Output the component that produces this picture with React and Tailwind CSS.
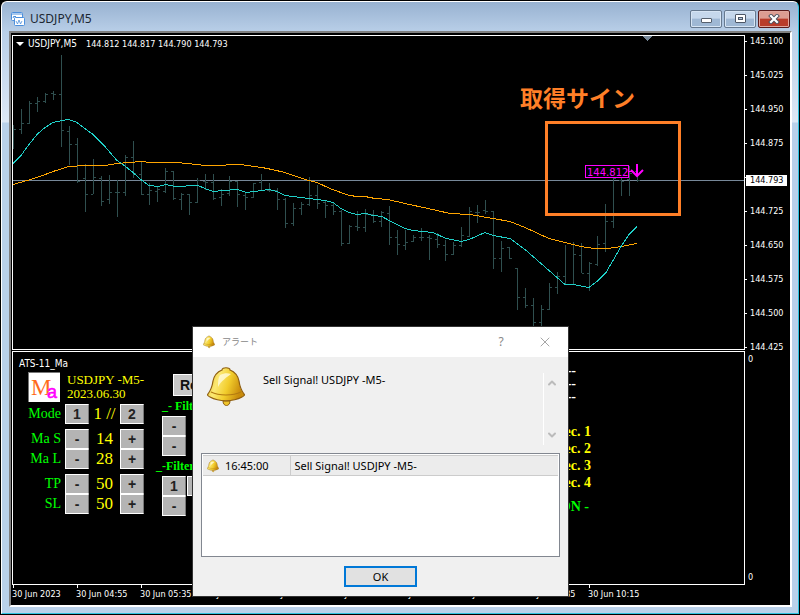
import { ChevronDown, ChevronUp, X } from 'lucide-react';

// the level next to the current price is only a tick
const PRICES = ['145.100', '145.025', '144.950', '144.875', '', '144.725', '144.650', '144.575', '144.500', '144.425'];
const TIMES = ['2023', '04:55', '05:35', '06:15', '06:55', '07:35', '08:15', '08:55', '09:35', '10:15'];

// [high, low, open, close], one bar every 8px
const BARS = [
  [125, 149, 129, 129], [109, 134, 129, 123], [101, 124, 123, 103], [97, 112, 103, 101], [93, 103, 101, 94],
  [91, 100, 93, 94], [55, 147, 94, 130], [126, 165, 131, 144], [138, 183, 144, 181], [164, 212, 178, 194],
  [159, 194, 194, 177], [176, 206, 178, 201], [175, 204, 199, 192], [180, 217, 192, 192], [155, 196, 192, 157],
  [141, 178, 157, 173], [162, 195, 174, 194], [183, 205, 194, 190], [186, 202, 191, 189], [168, 193, 191, 171],
  [171, 200, 171, 198], [193, 210, 199, 194], [194, 215, 194, 202], [178, 203, 202, 180], [174, 190, 181, 182],
  [174, 200, 182, 198], [189, 206, 197, 194], [176, 196, 193, 181], [181, 207, 181, 194], [192, 210, 195, 197],
  [183, 198, 197, 183], [174, 190, 182, 190], [183, 192, 190, 190], [188, 210, 190, 199], [198, 228, 199, 223],
  [203, 226, 223, 208], [202, 215, 208, 204], [177, 206, 204, 195], [185, 209, 195, 203], [200, 218, 202, 205],
  [202, 215, 205, 211], [210, 246, 211, 243], [225, 244, 243, 226], [211, 231, 226, 227], [209, 232, 227, 214],
  [210, 223, 214, 221], [211, 227, 221, 212], [206, 245, 213, 237], [230, 255, 237, 244], [230, 250, 245, 242],
  [235, 242, 241, 237], [228, 241, 237, 237], [235, 260, 237, 238], [233, 248, 239, 244], [240, 261, 245, 254],
  [242, 255, 254, 245], [227, 247, 245, 235], [207, 237, 236, 211], [205, 223, 212, 212], [200, 214, 210, 211],
  [211, 269, 211, 258], [241, 272, 258, 248], [247, 259, 247, 258], [268, 310, 268, 297], [288, 308, 297, 305],
  [298, 327, 305, 322], [305, 328, 322, 309], [283, 310, 309, 287], [272, 294, 287, 276], [245, 285, 276, 284],
  [242, 285, 284, 254], [243, 273, 255, 273], [262, 291, 273, 263], [236, 266, 264, 244], [204, 252, 243, 221],
  [178, 228, 221, 178], [178, 196, 180, 181], [166, 196, 179, 173], [168, 182, 171, 180],
];

const FAST_MA =
  '13,163 21,155 29,144 37,134 45,127 53,122 62,120 69,119 77,122 85,128 93,134 105,146 117,160 123,164 133,172 142,180 149,185 158,186 166,184 175,186 198,185 205,188 213,191 223,190 238,189 246,192 255,191 269,189 277,191 285,195 309,198 325,200 333,202 341,208 349,212 357,214 366,213 373,215 382,216 389,220 405,228 413,230 433,232 446,238 461,241 469,239 485,232 493,235 510,238 525,249 565,284 573,284 589,287 597,281 606,272 613,260 621,246 629,234 637,226';
const SLOW_MA =
  '13,184 27,180 40,176 53,171 69,166 85,165 105,165 117,163 130,162 141,161 150,162 175,162 188,163 205,165 222,165 230,164 240,164 262,167 272,169 285,172 293,175 309,180 317,182 330,188 349,195 358,196 365,196 375,198 388,199 405,203 437,210 450,213 470,214 493,218 510,221 525,227 549,238 565,242 581,246 594,248 608,248 621,246 637,243';

function Bell({ className }) {
  return (
    <svg viewBox="0 0 38 40" className={className} aria-hidden="true">
      <defs>
        <linearGradient id="bell" x1="0" x2="1" y1="0" y2="0.3">
          <stop offset="0" stopColor="#e9b91c" />
          <stop offset="0.35" stopColor="#fbe873" />
          <stop offset="0.65" stopColor="#f2cd2c" />
          <stop offset="1" stopColor="#c98c0c" />
        </linearGradient>
      </defs>
      <path d="M16 34c0 6 7 6 7 0z" fill="#f0c52b" stroke="#8f5f10" />
      <path d="M15 3c0-3 8-3 8 0 5 2 8 6 9 11 1 7 2 9 5 13 1 1 0 2-2 3-9 5-23 5-32 0-2-1-3-2-2-3 3-4 4-6 5-13 1-5 4-9 9-11z" fill="url(#bell)" stroke="#8f5f10" strokeWidth="1.2" />
      <path d="M4 25c8 4 22 4 30 0" fill="none" stroke="#b37b12" strokeWidth="1.2" />
      <path d="M13 8c4-2 8-2 11-1-4 3-10 7-13 13 0-5 0-9 2-12z" fill="#fffbe0" opacity="0.8" />
    </svg>
  );
}

function TitleBar() {
  const button = 'flex h-[18px] w-8 items-center justify-center rounded-[2px] border border-[#66798f] bg-linear-to-b from-[#c6d8ec] from-45% to-[#9fb8d4] to-50% shadow-[inset_0_0_0_1px_#d7e5f4]';
  return (
    <header className="flex h-[29px] shrink-0 items-center pt-1 pr-0.5 pl-0.5">
      <svg viewBox="0 0 14 14" className="size-3.5 shrink-0" fill="#fff" stroke="#4c8fdc" aria-hidden="true">
        <rect x="0.5" y="0.5" width="11" height="8" rx="1" />
        <path d="M1 2h10" strokeWidth="1" />
        <path d="M2 6l1-2 1 1 1-1" fill="none" />
        <rect x="3.5" y="5.5" width="10" height="8" rx="1" />
        <path d="M5 9l1.500 3 1.500-4 1.500 4 1.500-3" fill="none" strokeWidth="0.8" />
      </svg>
      <h1 className="flex-1 pl-[5px] font-['Noto_Sans'] text-xs text-[#1c2733]">USDJPY,M5</h1>
      <div className="flex gap-0.5">
        <button className={button} aria-label="Minimize">
          <span className="mt-1 h-[5px] w-[11px] rounded-[1px] border border-[#56606d] bg-white" />
        </button>
        <button className={button} aria-label="Maximize">
          <span className="flex h-[9px] w-[11px] items-center justify-center rounded-[1px] border border-[#4d5766] bg-white">
            <span className="h-[3px] w-[5px] border border-[#4d5766] bg-[#b5c8dd]" />
          </span>
        </button>
        <button
          className="flex h-[18px] w-8 items-center justify-center rounded-[2px] border border-[#5a1b1b] bg-linear-to-b from-[#dd9d92] from-45% to-[#b93c2a] to-50% shadow-[inset_0_0_0_1px_#e0a79e]"
          aria-label="Close"
        >
          <svg viewBox="0 0 12 10" className="h-2.5 w-3" strokeLinecap="square" aria-hidden="true">
            <path d="M3 2l6 6M9 2l-6 6" stroke="#4b4f5c" strokeWidth="4" />
            <path d="M3 2l6 6M9 2l-6 6" stroke="#fff" strokeWidth="2.200" />
          </svg>
        </button>
      </div>
    </header>
  );
}

function PriceChart() {
  return (
    <section className="relative h-[315px] shrink-0 overflow-hidden border border-white">
      <svg className="block h-full w-full" shapeRendering="crispEdges" fill="none">
        <g transform="translate(-13 -36)">
          <path d="M13 180.500H2600" stroke="#778899" />
          {BARS.map(([high, low, open, close], i) => {
            const x = 13 + i * 8;
            return (
              <path
                key={i}
                d={`M${x + 0.5} ${high}V${low}M${x - 2} ${open + 0.5}h2M${x + 1} ${close + 0.5}h2`}
                stroke="#2f4f4f"
              />
            );
          })}
          <polyline points={SLOW_MA} stroke="#ffa500" transform="translate(0 0.5)" />
          <polyline points={FAST_MA} stroke="#20d0c8" transform="translate(0 0.5)" />
          <path d="M642 36h10l-5 5z" fill="#778899" />
          <rect x="585.500" y="165.500" width="43" height="12" stroke="#f0f" />
          <path d="M629 171.500h4" stroke="#f0f" />
          <path d="M637 164v12M631 170l6 6 6-6" stroke="#f0f" strokeWidth="2" shapeRendering="auto" />
          <text x="587" y="176" fill="#f0f" className="font-['DejaVu_Sans'] text-[10px]">144.812</text>
          <rect x="546.500" y="122.500" width="133" height="92" stroke="#ff7f27" strokeWidth="3" />
        </g>
      </svg>
      <p className="absolute top-px left-[3px] flex items-center text-[9px] leading-[14px] whitespace-nowrap">
        <svg viewBox="0 0 8 4" className="mr-1 h-1 w-2" fill="#fff" aria-hidden="true"><path d="M0 0h8L4 4z" /></svg>
        <span className="w-[58px] text-[10px]">USDJPY,M5</span>
        144.812 144.817 144.790 144.793
      </p>
      <p className="absolute top-[43px] left-[507px] font-['Noto_Sans_CJK_JP',sans-serif] text-[23px] leading-9 font-bold whitespace-nowrap text-[#ff7f27]">取得サイン</p>
    </section>
  );
}

function PadButton({ label, name }) {
  return (
    <button
      aria-label={name}
      className="flex h-5 w-6 shrink-0 items-center justify-center border border-t-white border-r-[#777] border-b-white border-l-white bg-[#b4b4b4] font-['Liberation_Sans_Narrow','Liberation_Sans',sans-serif] text-sm leading-none font-bold text-[#222]"
    >
      {label}
    </button>
  );
}

function Setting({ label, value, minus = '-', plus = '+' }) {
  return (
    <div className="flex items-center">
      <span className="w-12 text-right text-sm leading-5 text-[#0f0]">{label}</span>
      <span className="w-1 shrink-0" />
      <PadButton label={minus} name={`${label} ${minus}`} />
      <span className="w-[31px] text-center text-[17px] leading-5 text-[#ff0]">{value}</span>
      <PadButton label={plus} name={`${label} ${plus}`} />
    </div>
  );
}

function ControlPanel() {
  return (
    <section className="flex flex-1 overflow-hidden border border-white font-['Liberation_Serif']">
      <div className="w-[142px] shrink-0 pt-[5px]">
        <h2 className="pl-1.5 font-['DejaVu_Sans_Condensed'] text-[10px] leading-[14px]">ATS-11_Ma</h2>
        <div className="flex h-8 items-center gap-[7px] pl-[15px]">
          <svg viewBox="0 0 32 30" className="h-[30px] w-8 shrink-0" aria-hidden="true">
            <rect width="32" height="30" fill="#fff" />
            <path d="M0 30V0h32" fill="none" stroke="#777" strokeWidth="2" />
            <text x="3" y="23" fontSize="23" fill="#ff6a1a">M</text>
            <text x="19" y="26" fontSize="18" fill="#f0f" stroke="#f0f" strokeWidth="0.5" className="font-['Liberation_Sans']">a</text>
          </svg>
          <p className="text-[13px] leading-[14px] whitespace-nowrap text-[#ff0]">
            USDJPY -M5-<br />2023.06.30
          </p>
        </div>
        <div className="mt-px flex flex-col gap-[5px]">
          <Setting label="Mode" value="1 //" minus="1" plus="2" />
          <div>
            <Setting label="Ma S" value="14" />
            <Setting label="Ma L" value="28" />
          </div>
          <div>
            <Setting label="TP" value="50" />
            <Setting label="SL" value="50" />
          </div>
        </div>
      </div>

      <div className="w-[140px] shrink-0 pt-[22px] pl-[7px] font-bold whitespace-nowrap text-[#0f0]">
        <button className="ml-[11px] block h-[22px] w-14 border border-t-white border-r-[#777] border-b-white border-l-white bg-[#c8c8c8] pl-1.5 text-left font-['Liberation_Sans_Narrow','Liberation_Sans',sans-serif] text-sm leading-none text-[#111]">
          Reset
        </button>
        <h3 className="text-xs leading-5">_- Filter</h3>
        <PadButton label="-" name="Filter 1 down" />
        <PadButton label="-" name="Filter 2 down" />
        <h3 className="-ml-1.5 text-xs leading-5">_-Filter</h3>
        <div className="flex gap-px">
          <PadButton label="1" name="Filter mode 1" />
          <PadButton label="c" name="Filter mode c" />
        </div>
        <PadButton label="-" name="Filter 3 down" />
      </div>

      <div className="w-[296px] shrink-0 pt-3 text-right text-sm font-bold text-[#ff0]">
        <div className="pr-[15px] leading-[13px] text-white">
          <p>--</p>
          <p>--</p>
          <p>--</p>
        </div>
        <ul className="pt-5 leading-[17px]">
          <li>Sec. 1</li>
          <li>Sec. 2</li>
          <li>Sec. 3</li>
          <li>Sec. 4</li>
        </ul>
        <p className="pt-1.5 pr-0.5 text-[#0f0]">ON -</p>
      </div>
    </section>
  );
}

function AlertDialog() {
  return (
    <div
      role="dialog"
      aria-labelledby="alert-title"
      className="absolute top-[327px] left-[193px] flex w-[375px] flex-col bg-[#f0f0f0] font-['Noto_Sans','Noto_Sans_CJK_JP',sans-serif] text-[11px] text-black shadow-[0_0_0_1px_#333]"
    >
      <div className="flex h-[30px] items-center bg-white pr-[15px] pl-2.5">
        <Bell className="h-3.5 w-3" />
        <h2 id="alert-title" className="flex-1 pl-[7px] text-[9px] text-[#888]">アラート</h2>
        <button className="w-4 text-xs text-[#888]" aria-label="Help">?</button>
        <button className="ml-7 text-[#777]" aria-label="Close alert"><X size={16} strokeWidth={1} /></button>
      </div>
      <div className="flex h-[96px] items-start pr-2.5 pl-3.5 pt-2.5">
        <Bell className="h-10 w-[38px]" />
        <p className="flex-1 pt-[5px] pl-[18px] leading-4">Sell Signal! USDJPY -M5-</p>
        <div className="mt-1.5 flex h-[72px] flex-col justify-between border-l border-white py-1 pl-0.5 text-[#bbb]">
          <ChevronUp size={12} strokeWidth={4} />
          <ChevronDown size={12} strokeWidth={4} />
        </div>
      </div>
      <div className="mx-2 h-[104px] border border-[#828790] bg-white p-px">
        <table className="w-full border-collapse bg-[#ececec]">
          <tbody>
            <tr className="h-5 border-y border-[#ccc]">
              <td className="w-[87px] border-r border-[#ccc]">
                <span className="flex items-center gap-1.5 pl-1 leading-4"><Bell className="h-3.5 w-3" />16:45:00</span>
              </td>
              <td className="pl-1 leading-4">Sell Signal! USDJPY -M5-</td>
            </tr>
          </tbody>
        </table>
      </div>
      <button className="mt-[9px] mb-[9px] h-[21px] w-[73px] self-center border-2 border-[#0078d7] bg-[#e1e1e1] leading-none">OK</button>
    </div>
  );
}

export default function App() {
  return (
    <div className="relative flex min-h-screen bg-black p-px font-['DejaVu_Sans_Condensed','DejaVu_Sans',sans-serif] text-white">
      <div className="flex min-w-0 flex-1 flex-col rounded-t-md border border-t-white border-r-[#2fc3e0] border-b-[#2fc3e0] border-l-white bg-[linear-gradient(#98b2d1_0px,#b9cfe8_30px,#dde8f5_120px,#b9d1ea_121px)] pr-1.5 pb-1.5 pl-[7px]">
        <TitleBar />
        <main className="flex flex-1 flex-col border-2 border-t-[#808080] border-r-white border-b-white border-l-[#808080] bg-black pt-0.5 pl-px">
          <div className="flex flex-1">
            <div className="flex min-w-0 flex-1 flex-col gap-px">
              <PriceChart />
              <ControlPanel />
            </div>
            <div className="flex w-[45px] shrink-0 flex-col text-[9px] leading-3">
              <ul className="relative flex h-[318px] shrink-0 flex-col justify-between">
                {PRICES.map((price, i) => (
                  <li key={i} className="flex h-3 items-center gap-[3px]">
                    <span className="h-px w-0.5 bg-white" />
                    {price}
                  </li>
                ))}
                <li className="absolute top-[140px] left-px h-[11px] w-[41px] bg-white pl-1 leading-[11px] text-black">144.793</li>
              </ul>
              <div className="flex flex-1 flex-col justify-between pb-0.5 pl-[3px]">
                <span>0</span>
                <span>0</span>
              </div>
            </div>
          </div>
          <ul className="flex h-5 overflow-hidden text-[9px] leading-3">
            {TIMES.map((time) => (
              <li key={time} className="w-16 shrink-0 whitespace-nowrap">
                <span className="ml-px block h-[3px] w-px bg-white" />
                30 Jun {time}
              </li>
            ))}
          </ul>
        </main>
      </div>
      <AlertDialog />
    </div>
  );
}
